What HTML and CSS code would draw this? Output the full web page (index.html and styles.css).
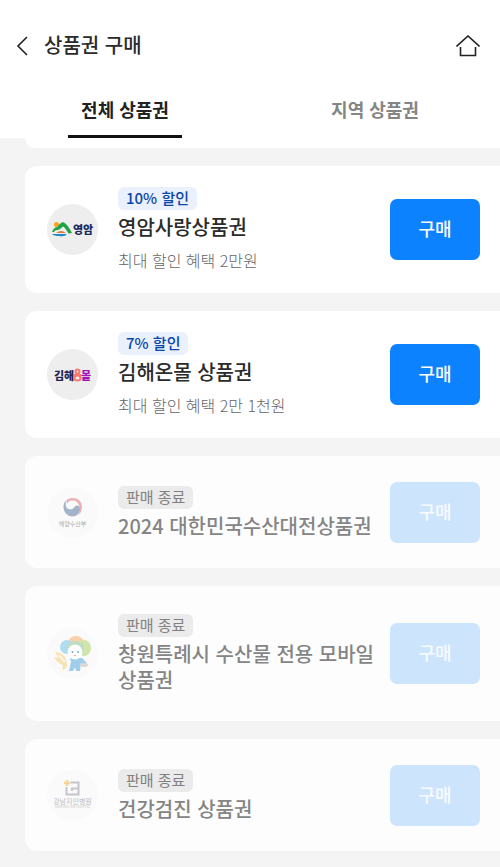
FILE: index.html
```html
<!DOCTYPE html>
<html lang="ko">
<head>
    <meta charset="UTF-8">
    <meta name="viewport" content="width=device-width, initial-scale=1.0">
    <title>상품권 구매</title>
    <link rel="stylesheet" href="styles.css">
</head>
<body>
    <header class="header">
        <div class="title-bar">
            <button class="icon-button" type="button" aria-label="뒤로">
                <svg width="12" height="20" viewBox="0 0 12 20"><path d="M11 1L2 10L11 19"/></svg>
            </button>
            <h1>상품권 구매</h1>
            <a class="icon-button home" href="#" aria-label="홈">
                <svg width="24" height="22" viewBox="0 0 24 22"><path d="M0.500 11.500L12 1L23.500 11.500M4.500 12V20.500H19.500V12"/></svg>
            </a>
        </div>
        <nav class="tabs">
            <button class="tab active" type="button">전체 상품권</button>
            <button class="tab" type="button">지역 상품권</button>
        </nav>
    </header>

    <main>
        <div class="card-end"></div>
        <ul class="list">
            <li class="card">
                <svg class="logo" viewBox="0 0 51 51">
                    <circle cx="25.500" cy="25.500" r="25.500" fill="#eee"/>
                    <circle cx="9.500" cy="20.500" r="2.500" fill="#f8a01b"/>
                    <path d="M5 28Q7 23 10.500 23Q14 17.500 17 18.500Q21 21 25 29L21.500 29.500Q18 23.500 16 22.500Q13 25.500 11 26Q8 25.500 7 28Z" fill="#20a344"/>
                    <path d="M9 29Q14 25 19 29Z" fill="#e3783b"/>
                    <path d="M5 30H20Q18 33 12 32Q7 32 5 30Z" fill="#2389ca"/>
                    <text x="26" y="30" font-size="11" fill="#172b61">영암</text>
                </svg>
                <div class="info">
                    <span class="badge">10% 할인</span>
                    <h2>영암사랑상품권</h2>
                    <p>최대 할인 혜택 2만원</p>
                </div>
                <button class="buy" type="button">구매</button>
            </li>

            <li class="card">
                <svg class="logo" viewBox="0 0 51 51">
                    <circle cx="25.500" cy="25.500" r="25.500" fill="#eee"/>
                    <text x="7" y="31" font-size="11" fill="#222452">김해</text>
                    <g fill="none" stroke="#f6786c" stroke-width="2">
                        <circle cx="30.500" cy="22.500" r="2"/>
                        <path d="M27 26H34"/>
                        <ellipse cx="30.500" cy="29" rx="3" ry="2.500"/>
                    </g>
                    <text x="34" y="31" font-size="11" fill="#a312b5">몰</text>
                </svg>
                <div class="info">
                    <span class="badge">7% 할인</span>
                    <h2>김해온몰 상품권</h2>
                    <p>최대 할인 혜택 2만 1천원</p>
                </div>
                <button class="buy" type="button">구매</button>
            </li>

            <li class="card ended">
                <svg class="logo" viewBox="0 0 51 51">
                    <circle cx="25.500" cy="25.500" r="25.500" fill="#fafafa"/>
                    <path d="M20 13C25 9 35 11 35 20C35 24 33 27 31 28.500C35 22 32 14 26 13.500C23 13 21 15 20 17Z" fill="#efb0b5"/>
                    <path d="M21 12A9.500 9.500 0 0 0 25 29.500C30 29.500 33 26 33 22C33 18 29 17.500 27.500 20C26 22.500 22.500 23.500 20 21C17.500 18 19 14 21 12Z" fill="#a3b3c8"/>
                    <text x="25.500" y="39" text-anchor="middle" font-size="6" fill="#aaa">해양수산부</text>
                </svg>
                <div class="info">
                    <span class="badge">판매 종료</span>
                    <h2>2024 대한민국수산대전상품권</h2>
                </div>
                <button class="buy" type="button" disabled>구매</button>
            </li>

            <li class="card ended">
                <svg class="logo" viewBox="0 0 51 51">
                    <circle cx="25.500" cy="25.500" r="25.500" fill="#fafafa"/>
                    <ellipse cx="29" cy="15" rx="8" ry="7" fill="#f9d0aa"/>
                    <ellipse cx="20" cy="19" rx="7" ry="7" fill="#b0dcf2"/>
                    <ellipse cx="37" cy="20" rx="7" ry="8" fill="#cfe5ac"/>
                    <path d="M20 17Q28 9 37 17Q38 26 29 29Q20 26 20 17Z" fill="#bdddc0"/>
                    <path d="M23 30H35L40 35L37 38L34 35L33 43H29L28 39L26 43H22L24 34Z" fill="#9fcdec"/>
                    <circle cx="28" cy="24" r="7.500" fill="#fff"/>
                    <circle cx="25.500" cy="24" r="1" fill="#76add8"/>
                    <circle cx="31" cy="24" r="1" fill="#76add8"/>
                    <path d="M27 27Q28 29 29 27" fill="none" stroke="#eda5a2"/>
                    <path d="M8 24Q19 24 20 37Q20 41 15 42L16 37Q9 34 7 29L12 30Z" fill="#f7e2b5"/>
                    <path d="M12 27L18 34" stroke="#fdf6e3" stroke-width="2"/>
                    <ellipse cx="37" cy="37" rx="4" ry="2" fill="#ddd8d4"/>
                </svg>
                <div class="info">
                    <span class="badge">판매 종료</span>
                    <h2>창원특례시 수산물 전용 모바일 상품권</h2>
                </div>
                <button class="buy" type="button" disabled>구매</button>
            </li>

            <li class="card ended">
                <svg class="logo" viewBox="0 0 51 51">
                    <circle cx="25.500" cy="25.500" r="25.500" fill="#fafafa"/>
                    <path d="M20 10V16M17 13H23" stroke="#fad596" stroke-width="2.500"/>
                    <path d="M19.500 17V24.500H31.500V12.500H23.500M31 18.500H25V21" fill="none" stroke="#c5c5cb" stroke-width="2"/>
                    <text x="25.500" y="34" text-anchor="middle" font-size="7" fill="#bdbdbd">강남지인병원</text>
                    <text x="25.500" y="38" text-anchor="middle" font-size="3" fill="#c8c8c8">GANGNAM JIIN HOSPITAL</text>
                </svg>
                <div class="info">
                    <span class="badge">판매 종료</span>
                    <h2>건강검진 상품권</h2>
                </div>
                <button class="buy" type="button" disabled>구매</button>
            </li>
        </ul>
    </main>
</body>
</html>
```
FILE: styles.css
```css
* {
    box-sizing: border-box;
}

body {
    margin: 0;
    background-color: #f4f4f4;
    color: #2b2b2b;
    font-family: "Noto Sans CJK KR", sans-serif;
}

button {
    border: none;
    padding: 0;
    background: none;
    font-family: inherit;
    cursor: pointer;
}

h1, h2, p, ul {
    margin: 0;
    padding: 0;
}

.header {
    background-color: #fff;
}

.title-bar {
    display: flex;
    align-items: center;
    height: 84px;
    padding: 8px 20px 0 16px;
}

.title-bar h1 {
    flex: 1;
    margin-left: 16px;
    padding-bottom: 2px;
    font-size: 20px;
    line-height: 28px;
    font-weight: 500;
}

.icon-button svg {
    display: block;
    fill: none;
    stroke: #222;
    stroke-width: 1.6;
}

.tabs {
    display: grid;
    grid-template-columns: 1fr 1fr;
    justify-items: center;
}

.tab {
    height: 54px;
    padding: 0 13px 1px;
    border-bottom: 3px solid transparent;
    font-size: 18px;
    line-height: 26px;
    font-weight: 700;
    color: #858585;
}

.tab.active {
    color: #222;
    border-bottom-color: #111;
}

/* lower edge of the card scrolled under the header */
.card-end {
    height: 10px;
    margin-left: 25px;
    background-color: #fff;
    border-bottom-left-radius: 10px;
}

.list {
    display: flex;
    flex-direction: column;
    gap: 18px;
    padding: 18px 0 16px 25px;
    list-style: none;
}

.card {
    display: flex;
    align-items: center;
    min-height: 127px;
    padding: 20px 20px 20px 22px;
    background-color: #fff;
    border-radius: 12px 0 0 12px;
}

.logo {
    flex: none;
    width: 51px;
    height: 51px;
    margin-right: 20px;
    font-weight: 900;
}

.info {
    flex: 1;
    display: flex;
    flex-direction: column;
    align-items: flex-start;
}

.badge {
    padding: 0 8px 2px;
    margin-bottom: 4px;
    border-radius: 6px;
    background-color: #eaf0fc;
    color: #0b45a8;
    font-size: 15px;
    line-height: 21px;
    font-weight: 500;
}

.info h2 {
    font-size: 20px;
    line-height: 26px;
    font-weight: 500;
    word-break: keep-all;
}

.info p {
    margin-top: 8px;
    font-size: 16px;
    line-height: 24px;
    font-weight: 300;
    color: #666;
}

.buy {
    flex: none;
    width: 90px;
    height: 61px;
    margin-left: 12px;
    padding-bottom: 3px;
    border-radius: 7px;
    background-color: #0d82ff;
    color: #fff;
    font-size: 18px;
    font-weight: 500;
}

.card.ended {
    min-height: 112px;
    padding-top: 25px;
    padding-bottom: 25px;
    background-color: #fdfdfd;
    color: #858585;
}

.ended .info {
    padding: 3px 0;
}

.ended .logo {
    font-weight: 400;
}

.ended .badge {
    background-color: #ebebeb;
    color: #808080;
    font-weight: 400;
}

.ended .buy {
    background-color: #cde4fd;
    color: #f7fbff;
    cursor: default;
}
```
